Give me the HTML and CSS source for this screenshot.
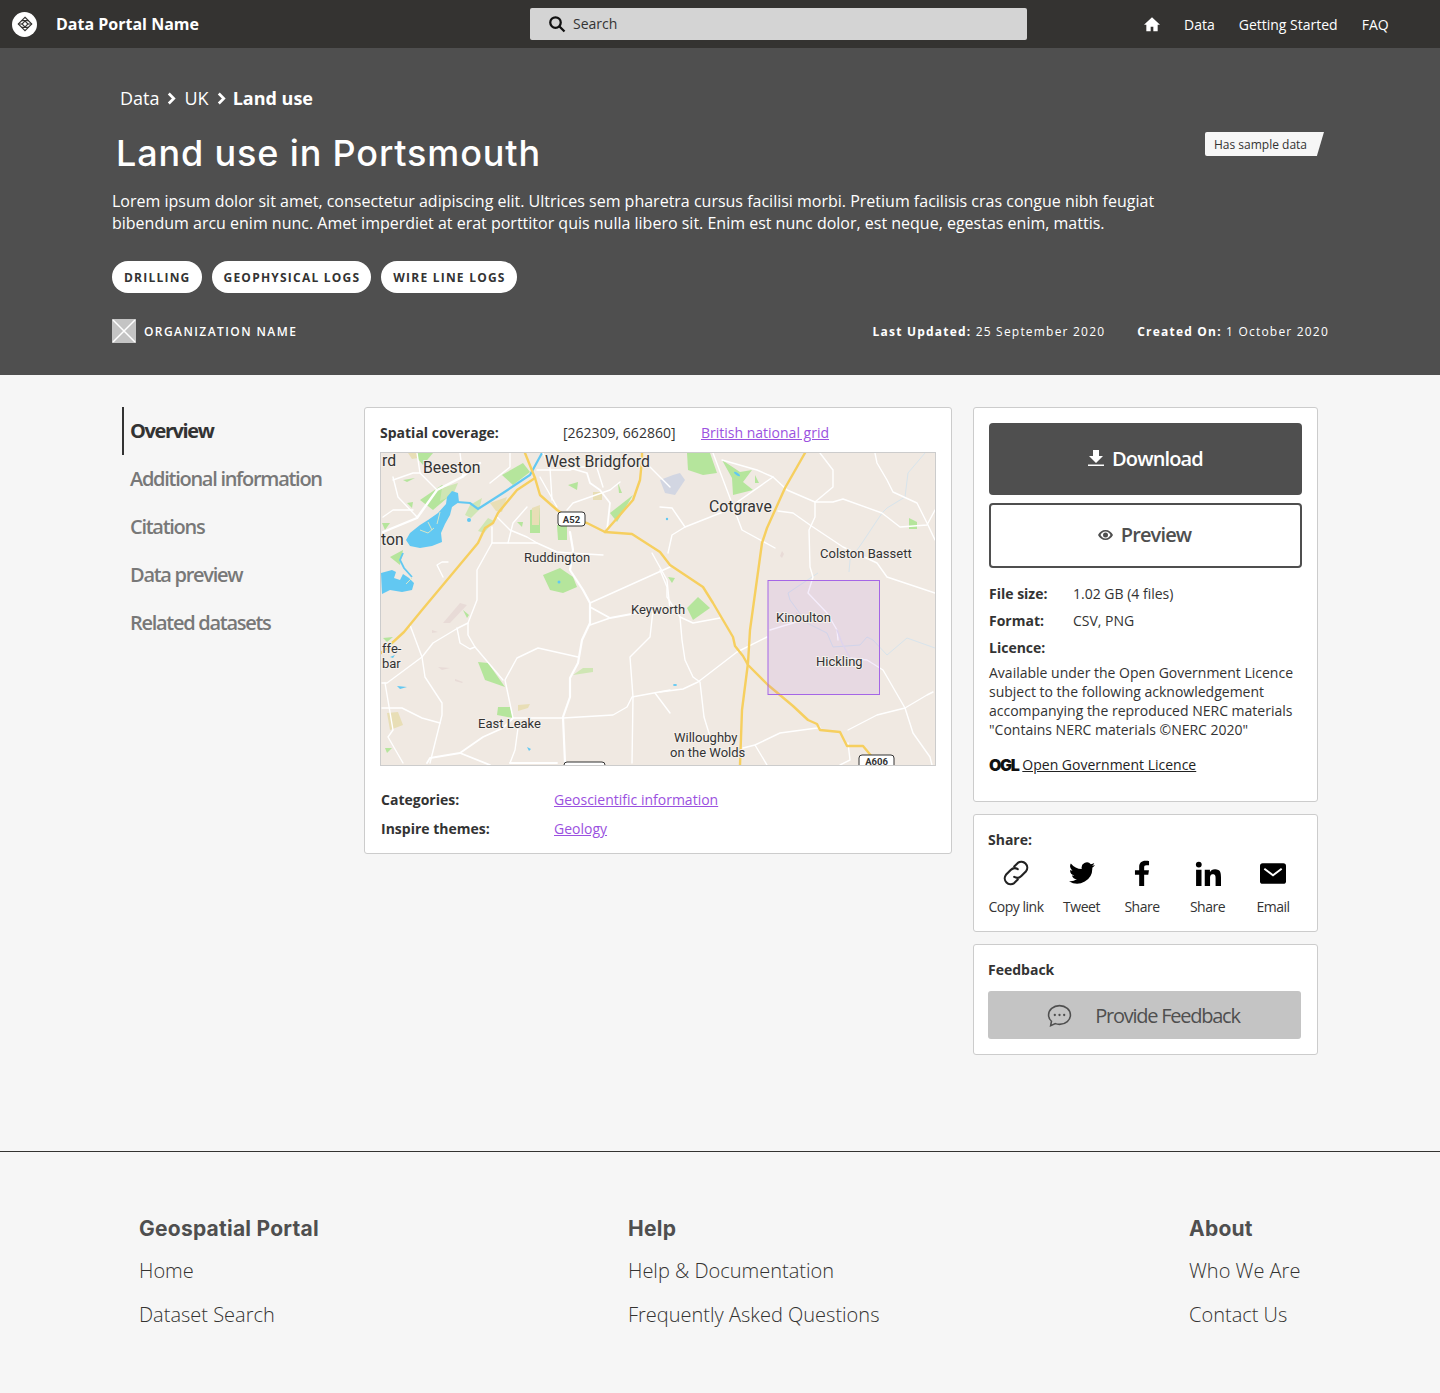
FILE: index.html
```html
<!DOCTYPE html>
<html lang="en">

<head>
    <meta charset="UTF-8">
    <meta name="viewport" content="width=device-width, initial-scale=1.0">
    <title>Land use in Portsmouth</title>
    <link rel="stylesheet" href="styles.css">
</head>

<body>
    <header class="topbar">
        <div class="brand">
            <span class="brand-logo">
                <svg viewBox="0 0 24 24" width="18" height="18" fill="none" stroke="#343331" stroke-width="1.5">
                    <path d="M12 3l9 9-9 9-9-9z" />
                    <path d="M12 8l4 4-4 4-4-4z" />
                    <path d="M7.5 7.5h9M7.5 16.5h9M3 12h5M16 12h5" />
                </svg>
            </span>
            <span class="brand-name">Data Portal Name</span>
        </div>
        <div class="search">
            <svg viewBox="0 0 24 24" width="18" height="18" fill="none" stroke="#111" stroke-width="3">
                <circle cx="10" cy="10" r="7" />
                <path d="M15 15l7 7" />
            </svg>
            <span>Search</span>
        </div>
        <nav class="topnav">
            <svg class="home-icon" viewBox="0 0 24 24" width="16" height="16" fill="#fff">
                <path d="M12 2L0 13h3.5v10h6.5v-7h4v7h6.5V13H24z" />
            </svg>
            <a href="#">Data</a>
            <a href="#">Getting Started</a>
            <a href="#">FAQ</a>
        </nav>
    </header>

    <section class="hero">
        <div class="crumbs">
            <span>Data</span>
            <svg viewBox="0 0 10 14" width="9" height="13" fill="none" stroke="#fff" stroke-width="3"><path d="M2 1.5L7.5 7 2 12.5" /></svg>
            <span>UK</span>
            <svg viewBox="0 0 10 14" width="9" height="13" fill="none" stroke="#fff" stroke-width="3"><path d="M2 1.5L7.5 7 2 12.5" /></svg>
            <b>Land use</b>
        </div>
        <div class="title-row">
            <h1>Land use in Portsmouth</h1>
            <span class="sample-badge">Has sample data</span>
        </div>
        <p class="intro">Lorem ipsum dolor sit amet, consectetur adipiscing elit. Ultrices sem pharetra cursus facilisi morbi. Pretium facilisis cras congue nibh feugiat bibendum arcu enim nunc. Amet imperdiet at erat porttitor quis nulla libero sit. Enim est nunc dolor, est neque, egestas enim, mattis.</p>
        <div class="tags">
            <span class="tag">DRILLING</span>
            <span class="tag">GEOPHYSICAL LOGS</span>
            <span class="tag">WIRE LINE LOGS</span>
        </div>
        <div class="meta">
            <div class="org">
                <svg viewBox="0 0 24 24" width="24" height="24">
                    <rect width="24" height="24" fill="#c4c4c4" />
                    <path d="M1 1l22 22M23 1L1 23" stroke="#fff" stroke-width="1.5" />
                </svg>
                <span>ORGANIZATION NAME</span>
            </div>
            <div class="dates">
                <span><b>Last Updated:</b> 25 September 2020</span>
                <span><b>Created On:</b> 1 October 2020</span>
            </div>
        </div>
    </section>

    <main class="content">
        <aside class="side">
            <a class="side-link active" href="#">Overview</a>
            <a class="side-link" href="#">Additional information</a>
            <a class="side-link" href="#">Citations</a>
            <a class="side-link" href="#">Data preview</a>
            <a class="side-link" href="#">Related datasets</a>
        </aside>

        <section class="card map-card">
            <div class="coverage">
                <b>Spatial coverage:</b>
                <span>[262309, 662860]</span>
                <a href="#">British national grid</a>
            </div>
            <div class="map">
                <svg viewBox="381 453 554 312" width="554" height="312">
                    <rect x="381" y="453" width="554" height="312" fill="#f0e9e2" />

                    <!-- parks and fields -->
                    <g fill="#b5e59c">
                        <path d="M687 453h23l7 20-14 2-15-5z" />
                        <path d="M722 460l18 12 12-2-9 12 10 8-20 5-1-17z" />
                        <path d="M755 475l4 8h-4z" />
                        <path d="M909 518l8 4v7h-8z" />
                        <path d="M687 608l11-11 12 11-17 12z" />
                        <path d="M668 577l7 1-3 5z" />
                        <path d="M502 475l21-12 7 9-17 13z" />
                        <path d="M420 500l22-15 11 8-20 17z" />
                        <path d="M610 513l23-18-16 27z" />
                        <path d="M530 510l10-2v25h-10z" />
                        <path d="M557 525h10v15h-9z" />
                        <path d="M543 575l17-7 13 9 4 10-14 6-13-3z" />
                        <path d="M413 453h20l-10 12z" />
                        <path d="M403 480l12-2-8 4z" />
                        <path d="M407 503l6-1-1 6z" />
                        <path d="M382 523h8l-5 7z" />
                        <path d="M568 485l10-3-1 8z" />
                        <path d="M517 522h6l-1 5z" />
                        <path d="M618 483l4 10-3 0z" />
                        <path d="M390 557l13-7-3 15z" />
                        <path d="M478 662l10 1 17 24-20-7z" />
                        <path d="M498 707h12l3 11-16-3z" />
                        <path d="M385 748h7l-5 5z" />
                        <path d="M463 610l6 5-2 3z" />
                        <path d="M383 638l10-1-6 5z" />
                    </g>
                    <g fill="#cfe6b4">
                        <path d="M573 675l10-7h10v4z" />
                        <path d="M442 488l16-5-5 12-13 6z" />
                        <path d="M470 505l12-7-3 12-8 8-6-3z" />
                        <path d="M488 518l6 3-10 12-6-2z" />
                    </g>
                    <g fill="#e8deb6">
                        <path d="M490 503l17-6-5 15-6-1z" />
                        <path d="M593 492h9v8h-9z" />
                        <path d="M518 705l12-1-2 4-10 3z" />
                        <path d="M387 713l11-1 5 13-13 5z" />
                        <path d="M532 508l8-3-1 20-7 0z" />
                        <path d="M408 453h9l1 5-6 1z" />
                    </g>
                    <path d="M660 480l13-5 7-2 5 7-10 15-10-2z" fill="#d2d6e2" />
                    <g fill="#e8dbd7">
                        <path d="M443 623l17-20 7 2-17 18z" />
                        <path d="M438 667l12 1-8 2z" />
                        <path d="M455 679l8 3-1 1-7-2z" />
                        <path d="M432 630l6 2-6 1z" />
                        <path d="M780 556l2-5 2 3-2 4z" />
                        <path d="M795 615l2-3 1 4z" />
                    </g>

                    <!-- water -->
                    <g fill="#62c8f2">
                        <path d="M458 493l-6-2-5 6-1 7-8 9-10 7-8 5-10 8-4 7 4 6 10 2 12-2 10-4-1-9 4-9 5-9 2-8 7-5z" />
                        <path d="M381 573l11-3 4 2-2 6 6 2 3-6 6 4 5 5-2 7-10 2-12-2-8 4z" />
                        <path d="M397 686l10 1-7 2z" />
                        <path d="M527 747l4 2-2 2z" />
                        <path d="M390 657l5-2-2 3z" />
                    </g>
                    <g fill="none" stroke="#62c8f2">
                        <path stroke-width="2.2" d="M457 502l13 1 8 6 25-16 27-18 12-22" />
                        <path stroke-width="1.8" d="M403 553l-3 7 4 8 8 9" />
                    </g>
                    <path d="M420 530l8 3 6-5M428 522l4 8M440 512l-3 12M412 578l-6 6" fill="none" stroke="#d8e6c6" stroke-width="1" />
                    <g fill="#62c8f2">
                        <circle cx="469" cy="520" r="2" />
                        <ellipse cx="675" cy="685" rx="2" ry="1" />
                        <circle cx="667" cy="519" r="1.2" />
                        <ellipse cx="737" cy="474" rx="3.5" ry="1.2" transform="rotate(35 737 474)" />
                        <circle cx="559" cy="582" r="1.5" />
                    </g>
                    <g fill="none" stroke="#d7e4ec" stroke-width="1">
                        <path d="M925 453l-17 20-3 24-18 11-5 5-20 30-12 17-1 12" />
                        <path d="M818 573l-30 20 2 7 17 23 20 10 6 14 27-2 7-8 6 3 14 15 20-17 28 10" />
                    </g>

                    <!-- minor roads -->
                    <g fill="none" stroke="#fff" stroke-width="1.4" stroke-linejoin="round" stroke-linecap="round">
                        <path stroke-width="2.4" d="M383 532l34-14 20-28 25-13 18-14" />
                        <path d="M393 477l5 20 19 20" />
                        <path d="M383 517l10-7h20" />
                        <path d="M417 453l3 20 17 17" />
                        <path d="M393 480l20-7h7" />
                        <path d="M460 453l3 24" />
                        <path d="M510 453v14l-20 16" />
                        <path d="M537 470h33l7-3h16" />
                        <path d="M540 477l17 30" />
                        <path d="M543 453l7 15 2 32" />
                        <path stroke-width="1.8" d="M570 468l17 5 3 10 10 7 10 13-3 27" />
                        <path d="M567 510l6-7 37-13 10-8" />
                        <path d="M597 468l6 19" />
                        <path stroke-width="2.2" d="M570 532l3 18-3 20 13 20 7 13 0 20-8 17-4 23-8 15v19l-7 20 2 46" />
                        <path d="M497 517l13 13 17 7 10 6 20 9 13 1 33 2" />
                        <path d="M527 507l-14 16-5 20" />
                        <path d="M492 527v16h45" />
                        <path d="M492 543l-15 27v30l-9 23-10 5-25 15-11 14-35 26h-5" />
                        <path d="M448 562l-6 0-5 3 6 12" />
                        <path d="M590 603l80-36" />
                        <path d="M652 553l15 27 3 30" />
                        <path d="M650 467l20 20" />
                        <path d="M713 453l29 77 33 18" />
                        <path d="M660 507l12 1 13 19 38-15 50-35" />
                        <path d="M685 527l-13 8-4 18" />
                        <path d="M722 460l35 10 16 7 14 13 28 12h18l10-3 39 14 18 14 27-2 8-15" />
                        <path d="M820 453l13 17v17l-18 15v15l-6 13 1 37 3 10-5 16 19 20 10 17 1 10" />
                        <path d="M778 511l15 2 17 12 33 22 34 16 10 14 48 16" />
                        <path d="M875 453l2 10 10 17 6 12 24 11 10 20 8 17" />
                        <path d="M770 630l23-7 17-6" />
                        <path d="M660 570l7 17v10l13 20 2 23 3 20 8 17 7 5 4 35 8 26" />
                        <path d="M680 617l13 6 27-5" />
                        <path stroke-width="1.8" d="M590 607l20 11 43-8" />
                        <path d="M590 625l20-7" />
                        <path d="M578 657l-40-9-21 10-12 22 8 38h50l50-3 14-8 5-10 38-7" />
                        <path d="M468 623v12l7 12 28 33" />
                        <path d="M457 628l3 15 10 6 5-2" />
                        <path d="M410 625l12 32 3 20 17 26v12l-2 8-10 40" />
                        <path d="M382 708h20l20 10 18 5" />
                        <path d="M385 683l8 47-5 7 15 26" />
                        <path stroke-width="1.8" d="M513 718l-10 10-20 9-23 16-30 5-3 5" />
                        <path stroke-width="1.8" d="M460 753l30 12" />
                        <path stroke-width="1.8" d="M510 763h47" />
                        <path d="M518 728l-3 22-5 13" />
                        <path d="M653 610l-3 27-20 20 3 40-1 66" />
                        <path d="M655 693l15 20" />
                        <path d="M660 692l23-3 15-7 39-30 30-15" />
                        <path d="M743 748l12-3 25-12 37-5 3-1" />
                        <path d="M755 745l12 20" />
                        <path d="M848 730l29-15 28-7 22-13 6-3" />
                        <path d="M840 765l10-5-2-17" />
                        <path d="M905 708l8 25 17 24 2 8" />
                        <path d="M850 658l17 2 16 10 22 38" />
                        <path d="M837 630l5 13 8 15" stroke="#e6e3f0" />
                    </g>

                    <!-- main roads -->
                    <g fill="none" stroke="#f6cf5f" stroke-width="2.4" stroke-linejoin="round" stroke-linecap="round">
                        <path d="M525 453l10 25 5 17 17 15 15 10 15 3 18 9 27 2 28 18 10 13 15 10 18 12 10 16 20 34 2 9 8 10 5 9 20 20 25 21 15 14 9 4 3 6 20 2 7 14h16l10 12" />
                        <path d="M805 453l-20 35-18 40-5 15-12 87-2 33-6 47-2 55" />
                        <path d="M535 478l-18 12-19 23-5 10-8 5-7 15-56 67-18 22-23 21-10 6" />
                        <path d="M642 453v7l-2 20-7 20-28 32" />
                    </g>

                    <!-- road shields -->
                    <g class="shield">
                        <rect x="558" y="512" width="27" height="14" rx="3" />
                        <text x="571.5" y="523" class="shield-text">A52</text>
                        <rect x="859" y="755" width="35" height="20" rx="3" />
                        <text x="876.5" y="764.5" class="shield-text">A606</text>
                        <rect x="564" y="762" width="41" height="14" rx="3" />
                    </g>

                    <!-- selected area -->
                    <rect x="768" y="580.5" width="111.5" height="114" fill="#9b51e0" fill-opacity="0.1" stroke="#a566e6" stroke-width="1" />

                    <!-- place names -->
                    <g class="labels">
                        <text x="382" y="466" class="lg">rd</text>
                        <text x="423" y="473" class="lg">Beeston</text>
                        <text x="545" y="466.5" class="lg">West Bridgford</text>
                        <text x="709" y="512" class="lg">Cotgrave</text>
                        <text x="381" y="545" class="lg">ton</text>
                        <text x="524" y="562">Ruddington</text>
                        <text x="631" y="614">Keyworth</text>
                        <text x="820" y="558">Colston Bassett</text>
                        <text x="776" y="622">Kinoulton</text>
                        <text x="816" y="666">Hickling</text>
                        <text x="478" y="728">East Leake</text>
                        <text x="674" y="742">Willoughby</text>
                        <text x="670" y="757">on the Wolds</text>
                        <text x="382" y="653">ffe-</text>
                        <text x="382" y="668">bar</text>
                    </g>
                </svg>
            </div>
            <div class="facts">
                <b>Categories:</b>
                <a href="#">Geoscientific information</a>
                <b>Inspire themes:</b>
                <a href="#">Geology</a>
            </div>
        </section>

        <div class="rail">
            <section class="card download-card">
                <a class="btn btn-dark" href="#">
                    <svg viewBox="0 0 16 16" width="16" height="16" fill="#fff"><path d="M5 0h6v6h4l-7 7-7-7h4zM0 14.5h16V16H0z" /></svg>
                    Download
                </a>
                <a class="btn btn-line" href="#">
                    <svg viewBox="0 0 24 16" width="15" height="10"><path fill="#4f4f4f" fill-rule="evenodd" d="M12 0C6.5 0 2.3 3.3 0 8c2.3 4.7 6.5 8 12 8s9.700-3.300 12-8c-2.300-4.700-6.500-8-12-8zm0 13.500c-3.500 0-6.500-2.500-8-5.500 1.500-3 4.500-5.500 8-5.500s6.500 2.500 8 5.500c-1.500 3-4.500 5.500-8 5.500z" /><circle cx="12" cy="8" r="4" fill="#4f4f4f" /></svg>
                    Preview
                </a>
                <dl class="file-info">
                    <dt>File size:</dt>
                    <dd>1.02 GB (4 files)</dd>
                    <dt>Format:</dt>
                    <dd>CSV, PNG</dd>
                    <dt>Licence:</dt>
                </dl>
                <p class="licence">Available under the Open Government Licence subject to the following acknowledgement accompanying the reproduced NERC materials "Contains NERC materials ©NERC 2020"</p>
                <div class="ogl"><span class="ogl-mark">OGL</span> <a href="#">Open Government Licence</a></div>
            </section>

            <section class="card share-card">
                <h3>Share:</h3>
                <div class="share-row">
                    <a class="share-item" href="#">
                        <svg viewBox="1 1 22 22" width="26" height="26" fill="none" stroke="#222" stroke-width="1.8" stroke-linecap="round">
                            <path d="M10.5 6.5l3-3a5 5 0 0 1 7 7l-4 4a5 5 0 0 1-6 .8" />
                            <path d="M13.5 17.5l-3 3a5 5 0 0 1-7-7l4-4a5 5 0 0 1 6-.8" />
                        </svg>
                        <span>Copy link</span>
                    </a>
                    <a class="share-item" href="#">
                        <svg viewBox="0 0 24 24" width="26" height="26" fill="#000"><path d="M24 4.600a10 10 0 0 1-2.800.8 4.900 4.900 0 0 0 2.100-2.700 9.800 9.800 0 0 1-3.100 1.200 4.900 4.900 0 0 0-8.400 4.500A14 14 0 0 1 1.700 3.200a4.900 4.900 0 0 0 1.500 6.600 4.900 4.900 0 0 1-2.200-.6 4.900 4.900 0 0 0 3.900 4.900 4.900 4.900 0 0 1-2.200.1 4.900 4.900 0 0 0 4.600 3.400A9.900 9.900 0 0 1 0 19.600 14 14 0 0 0 21.500 7.100 10 10 0 0 0 24 4.600z" /></svg>
                        <span>Tweet</span>
                    </a>
                    <a class="share-item" href="#">
                        <svg viewBox="0 0 24 24" width="26" height="26" fill="#000"><path d="M14 24V13.500h3.800l.6-4.100H14V7c0-1.300.4-2.100 2.200-2.100h2.300V1c-.4 0-1.800-.2-3.400-.2-3.400 0-5.700 2-5.700 5.800v2.800H5.500v4.100h3.900V24z" /></svg>
                        <span>Share</span>
                    </a>
                    <a class="share-item" href="#">
                        <svg viewBox="0 0 24 24" width="26" height="26" fill="#000"><path d="M1 9h5v15H1zM3.500 1.500a2.700 2.700 0 1 1 0 5.400 2.700 2.700 0 0 1 0-5.400zM9 9h4.800v2.100c.7-1.300 2.300-2.500 4.700-2.500 5 0 5.500 3.300 5.500 7.500V24h-5v-7c0-1.700 0-3.900-2.400-3.900s-2.700 1.800-2.700 3.800V24H9z" /></svg>
                        <span>Share</span>
                    </a>
                    <a class="share-item" href="#">
                        <svg viewBox="0 0 24 24" width="26" height="26"><rect x="0" y="3" width="24" height="19" rx="2.5" fill="#000" /><path d="M4 8l8 6 8-6" fill="none" stroke="#fff" stroke-width="1.8" /></svg>
                        <span>Email</span>
                    </a>
                </div>
            </section>

            <section class="card feedback-card">
                <h3>Feedback</h3>
                <a class="feedback-btn" href="#">
                    <svg viewBox="0 0 24 24" width="25" height="25" fill="none" stroke="#4f4f4f" stroke-width="1.5">
                        <path d="M12 2.500c6 0 10.500 4 10.500 9s-4.500 9-10.500 9c-1.500 0-3-.3-4-.7l-4.500 2 .8-4.300C2.500 16 1.500 14 1.500 11.500c0-5 4.500-9 10.500-9z" />
                        <circle cx="7.5" cy="11.5" r="1.1" fill="#4f4f4f" stroke="none" />
                        <circle cx="12" cy="11.5" r="1.1" fill="#4f4f4f" stroke="none" />
                        <circle cx="16.5" cy="11.5" r="1.1" fill="#4f4f4f" stroke="none" />
                    </svg>
                    <span>Provide Feedback</span>
                </a>
            </section>
        </div>
    </main>

    <footer class="footer">
        <div class="foot-col col-portal">
            <h4>Geospatial Portal</h4>
            <a href="#">Home</a>
            <a href="#">Dataset Search</a>
        </div>
        <div class="foot-col col-help">
            <h4>Help</h4>
            <a href="#">Help &amp; Documentation</a>
            <a href="#">Frequently Asked Questions</a>
        </div>
        <div class="foot-col col-about">
            <h4>About</h4>
            <a href="#">Who We Are</a>
            <a href="#">Contact Us</a>
        </div>
    </footer>
</body>

</html>
```

FILE: styles.css
```css
* {
    box-sizing: border-box;
}

body {
    margin: 0;
    background-color: #f6f6f6;
    color: #333;
    font-family: "Open Sans", "Liberation Sans", sans-serif;
    font-size: 14px;
}

a {
    color: inherit;
    text-decoration: none;
}

/* top bar */
.topbar {
    display: flex;
    align-items: center;
    height: 48px;
    background-color: #343331;
    color: #fff;
}

.brand {
    display: flex;
    align-items: center;
    width: 530px;
    padding-left: 12px;
}

.brand-logo {
    display: flex;
    align-items: center;
    justify-content: center;
    width: 25px;
    height: 25px;
    border-radius: 50%;
    background-color: #fff;
}

.brand-name {
    margin-left: 19px;
    font-size: 16px;
    font-weight: 700;
}

.search {
    display: flex;
    align-items: center;
    gap: 7px;
    width: 497px;
    height: 32px;
    padding-left: 18px;
    border-radius: 2px;
    background-color: #d4d4d4;
    color: #333;
}

.search span {
    margin-bottom: 2px;
}

.topnav {
    display: flex;
    align-items: center;
    gap: 24px;
    margin-left: 117px;
}

.home-icon {
    margin-right: 0;
}

/* hero */
.hero {
    height: 327px;
    padding: 39px 111px 0 112px;
    background-color: #4f4f4f;
    color: #fff;
}

.crumbs {
    display: flex;
    align-items: center;
    gap: 8px;
    height: 22px;
    margin-left: 8px;
    font-size: 18px;
}

.crumbs b {
    margin-left: -1px;
    font-weight: 700;
}

.title-row {
    display: flex;
    justify-content: space-between;
    align-items: flex-start;
    height: 54px;
    margin-top: 22px;
}

h1 {
    margin: 0 0 0 4px;
    font-family: Inter, "Open Sans", sans-serif;
    font-size: 36px;
    font-weight: 500;
    line-height: 44px;
    letter-spacing: 0.85px;
}

.sample-badge {
    display: flex;
    align-items: center;
    width: 119px;
    height: 24px;
    margin: 1px 5px 0 0;
    padding-left: 9px;
    background-color: #f6f6f6;
    color: #333;
    font-size: 12px;
    clip-path: polygon(0 0, 100% 0, 94% 100%, 0 100%);
    border-radius: 2px 0 0 2px;
}

.intro {
    width: 1060px;
    margin: 5px 0 0;
    font-size: 16px;
    line-height: 22px;
}

.tags {
    display: flex;
    gap: 10px;
    margin-top: 27px;
}

.tag {
    display: flex;
    align-items: center;
    height: 32px;
    padding: 0 11px 0 12px;
    border-radius: 16px;
    background-color: #fff;
    color: #333;
    font-size: 12px;
    font-weight: 700;
    letter-spacing: 1.22px;
}

.meta {
    display: flex;
    justify-content: space-between;
    align-items: center;
    margin-top: 26px;
    font-size: 12px;
    letter-spacing: 1.2px;
}

.org {
    display: flex;
    align-items: center;
    gap: 8px;
    font-weight: 600;
    letter-spacing: 1.42px;
}

.dates {
    display: flex;
    gap: 32px;
}

.dates b {
    font-weight: 700;
}

/* main */
.content {
    display: flex;
    align-items: flex-start;
    height: 776px;
    padding: 32px 0 0 122px;
}

.side {
    display: flex;
    flex-direction: column;
    width: 242px;
}

.side-link {
    display: flex;
    align-items: center;
    height: 48px;
    padding: 0 0 2px 8px;
    color: #787878;
    font-size: 20px;
    font-weight: 600;
    letter-spacing: -1.28px;
}

.side-link.active {
    padding-left: 6px;
    border-left: 2px solid #333;
    color: #333;
    font-weight: 700;
    letter-spacing: -1.4px;
}

.card {
    border: 1px solid #ccc;
    border-radius: 3px;
    background-color: #fff;
}

.map-card {
    width: 588px;
    height: 447px;
    padding: 14px 15px 15px;
}

.coverage {
    display: flex;
    align-items: center;
    height: 20px;
}

.coverage b {
    width: 183px;
    font-weight: 700;
}

.coverage span {
    width: 138px;
}

.coverage a,
.facts a {
    color: #9b51e0;
    text-decoration: underline;
}

.map {
    width: 556px;
    height: 314px;
    margin-top: 10px;
    border: 1px solid #ccc;
    overflow: hidden;
}

.map svg {
    display: block;
}

.labels text {
    fill: #333;
    font-family: Roboto, "Noto Sans", sans-serif;
    font-size: 13px;
    paint-order: stroke;
    stroke: #f5f0eb;
    stroke-width: 2px;
}

.labels text.lg {
    font-size: 15.8px;
}

.shield rect {
    fill: #fff;
    stroke: #333;
    stroke-width: 1;
}

.shield-text {
    fill: #333;
    font-family: Roboto, sans-serif;
    font-size: 9.5px;
    font-weight: 700;
    text-anchor: middle;
}

.facts {
    display: grid;
    grid-template-columns: 173px 1fr;
    row-gap: 9px;
    margin: 24px 0 0 1px;
    line-height: 20px;
}

.facts b {
    font-weight: 700;
}

/* right column */
.rail {
    display: flex;
    flex-direction: column;
    gap: 12px;
    width: 345px;
    margin-left: 21px;
}

.download-card {
    height: 395px;
    padding: 15px;
}

.btn {
    display: flex;
    align-items: center;
    justify-content: center;
    gap: 8px;
    width: 313px;
    padding-bottom: 2px;
    border-radius: 4px;
    font-size: 20px;
    font-weight: 600;
    letter-spacing: -0.85px;
}

.btn-dark {
    height: 72px;
    background-color: #4f4f4f;
    color: #fff;
}

.btn-line {
    height: 65px;
    margin-top: 8px;
    padding-right: 2px;
    border: 2px solid #4f4f4f;
    color: #4f4f4f;
}

.file-info {
    display: grid;
    grid-template-columns: 84px 1fr;
    row-gap: 7px;
    margin: 16px 0 0;
    line-height: 20px;
}

.file-info dt {
    font-weight: 700;
}

.file-info dd {
    margin: 0;
}

.licence {
    margin: 5px 0 0;
    line-height: 19px;
}

.ogl {
    display: flex;
    align-items: center;
    gap: 4px;
    margin-top: 16px;
    line-height: 20px;
}

.ogl a {
    text-decoration: underline;
    color: #222;
}

.ogl-mark {
    color: #111;
    font-family: Inter, sans-serif;
    font-size: 16px;
    font-weight: 900;
    letter-spacing: -1.4px;
}

h3 {
    margin: 0;
    font-size: 14px;
    font-weight: 700;
    line-height: 20px;
}

.share-card {
    height: 118px;
    padding: 15px 14px 0;
}

.share-row {
    display: flex;
    margin-top: 10px;
}

.share-item {
    display: flex;
    flex-direction: column;
    align-items: center;
    gap: 11px;
    font-size: 14px;
    letter-spacing: -0.5px;
}

.share-item:nth-child(1) { width: 56px; }
.share-item:nth-child(2) { width: 75px; }
.share-item:nth-child(3) { width: 46px; }
.share-item:nth-child(4) { width: 85px; }
.share-item:nth-child(5) { width: 46px; }

.feedback-card {
    height: 111px;
    padding: 15px 14px 0;
}

.feedback-btn {
    display: flex;
    align-items: center;
    justify-content: center;
    gap: 23px;
    width: 313px;
    height: 48px;
    margin-top: 11px;
    padding-right: 2px;
    border-radius: 3px;
    background-color: #c4c4c4;
    color: #4f4f4f;
    font-size: 20px;
    letter-spacing: -1.25px;
}

/* footer */
.footer {
    display: flex;
    height: 242px;
    padding: 64px 0 0 139px;
    border-top: 1px solid #343331;
}

.foot-col {
    display: flex;
    flex-direction: column;
    color: #343331;
    font-size: 20px;
    font-weight: 300;
    gap: 16px;
    line-height: 28px;
}

.foot-col h4 {
    margin: 0 0 -1px;
    color: #4f4f4f;
    font-family: Inter, sans-serif;
    font-size: 21px;
    font-weight: 700;
    line-height: 26px;
    letter-spacing: 0.25px;
}

.col-portal {
    width: 489px;
}

.col-help {
    width: 561px;
}
```
